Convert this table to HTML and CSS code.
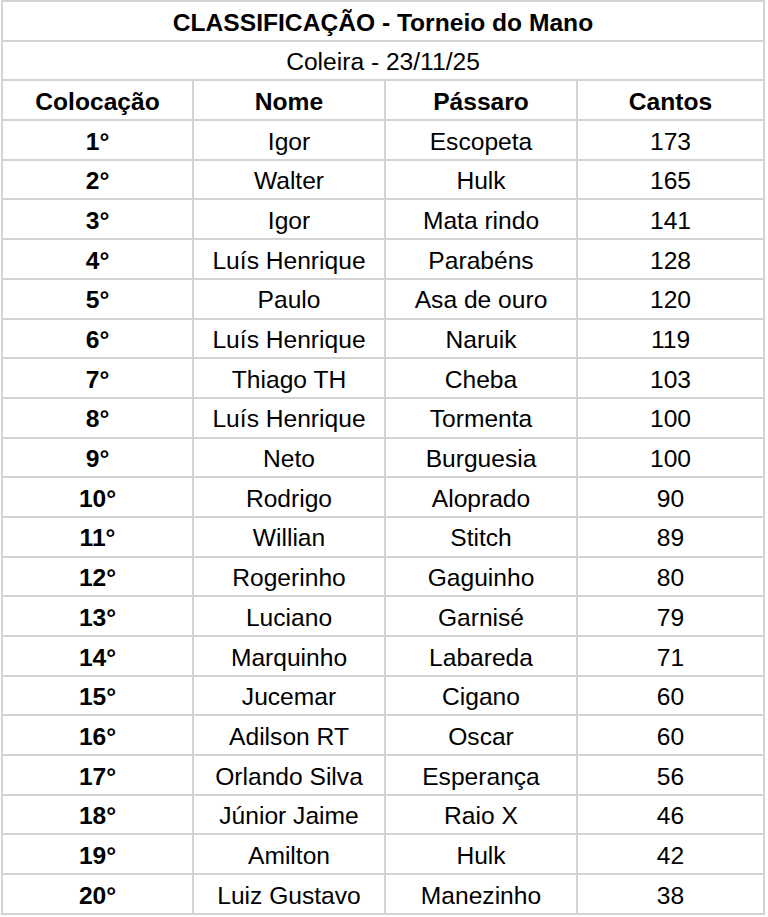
FILE: index.html
```html
<!DOCTYPE html>
<html lang="pt-BR">
<head>
<meta charset="utf-8">
<title>Classificação - Torneio do Mano</title>
<link rel="stylesheet" href="styles.css">
</head>
<body>
<div class="sheet">
  <div class="cell span bold">CLASSIFICAÇÃO - Torneio do Mano</div>
  <div class="cell span">Coleira - 23/11/25</div>
  <div class="cell bold">Colocação</div>
  <div class="cell bold">Nome</div>
  <div class="cell bold">Pássaro</div>
  <div class="cell bold">Cantos</div>

  <div class="cell bold">1°</div><div class="cell">Igor</div><div class="cell">Escopeta</div><div class="cell">173</div>
  <div class="cell bold">2°</div><div class="cell">Walter</div><div class="cell">Hulk</div><div class="cell">165</div>
  <div class="cell bold">3°</div><div class="cell">Igor</div><div class="cell">Mata rindo</div><div class="cell">141</div>
  <div class="cell bold">4°</div><div class="cell">Luís Henrique</div><div class="cell">Parabéns</div><div class="cell">128</div>
  <div class="cell bold">5°</div><div class="cell">Paulo</div><div class="cell">Asa de ouro</div><div class="cell">120</div>
  <div class="cell bold">6°</div><div class="cell">Luís Henrique</div><div class="cell">Naruik</div><div class="cell">119</div>
  <div class="cell bold">7°</div><div class="cell">Thiago TH</div><div class="cell">Cheba</div><div class="cell">103</div>
  <div class="cell bold">8°</div><div class="cell">Luís Henrique</div><div class="cell">Tormenta</div><div class="cell">100</div>
  <div class="cell bold">9°</div><div class="cell">Neto</div><div class="cell">Burguesia</div><div class="cell">100</div>
  <div class="cell bold">10°</div><div class="cell">Rodrigo</div><div class="cell">Aloprado</div><div class="cell">90</div>
  <div class="cell bold">11°</div><div class="cell">Willian</div><div class="cell">Stitch</div><div class="cell">89</div>
  <div class="cell bold">12°</div><div class="cell">Rogerinho</div><div class="cell">Gaguinho</div><div class="cell">80</div>
  <div class="cell bold">13°</div><div class="cell">Luciano</div><div class="cell">Garnisé</div><div class="cell">79</div>
  <div class="cell bold">14°</div><div class="cell">Marquinho</div><div class="cell">Labareda</div><div class="cell">71</div>
  <div class="cell bold">15°</div><div class="cell">Jucemar</div><div class="cell">Cigano</div><div class="cell">60</div>
  <div class="cell bold">16°</div><div class="cell">Adilson RT</div><div class="cell">Oscar</div><div class="cell">60</div>
  <div class="cell bold">17°</div><div class="cell">Orlando Silva</div><div class="cell">Esperança</div><div class="cell">56</div>
  <div class="cell bold">18°</div><div class="cell">Júnior Jaime</div><div class="cell">Raio X</div><div class="cell">46</div>
  <div class="cell bold">19°</div><div class="cell">Amilton</div><div class="cell">Hulk</div><div class="cell">42</div>
  <div class="cell bold">20°</div><div class="cell">Luiz Gustavo</div><div class="cell">Manezinho</div><div class="cell">38</div>
</div>
</body>
</html>
```

FILE: styles.css
```css
html, body {
  margin: 0;
  padding: 0;
  background: #ffffff;
}

body {
  font-family: "Liberation Sans", Arial, sans-serif;
  color: #000000;
}

.sheet {
  display: grid;
  grid-template-columns: 189px 190px 190px 185px;
  grid-auto-rows: 37.7px;
  gap: 2px;
  padding: 2px;
  margin-left: 1px;
  width: max-content;
  background: #d3d3d3;
}

.cell {
  background: #ffffff;
  display: flex;
  align-items: center;
  justify-content: center;
  padding-top: 4px;
  font-size: 24.6px;
  line-height: 1;
  white-space: nowrap;
}

.span {
  grid-column: 1 / -1;
}

.bold {
  font-weight: bold;
}
```
